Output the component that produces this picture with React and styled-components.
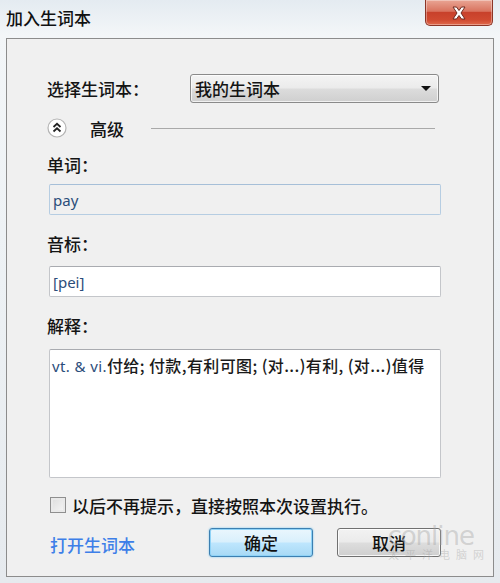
import React from 'react';
import styled, { createGlobalStyle } from 'styled-components';

const GlobalStyle = createGlobalStyle`
  html, body {
    margin: 0;
    padding: 0;
  }
  body {
    font-family: "Noto Sans CJK SC", "Liberation Sans", sans-serif;
    color: #141414;
  }
`;

const Window = styled.div`
  position: relative;
  width: 500px;
  height: 583px;
  display: flex;
  flex-direction: column;
  overflow: hidden;
  background: linear-gradient(180deg, #e4ebf1 0%, #f3f6f8 6%, #eef2f5 40%, #e6eaee 100%);
`;

const TitleBar = styled.div`
  height: 38px;
  display: flex;
  justify-content: space-between;
  align-items: flex-start;
  flex-shrink: 0;
`;

const Title = styled.div`
  margin: 7px 0 0 6px;
  font-size: 17px;
  font-weight: 500;
  line-height: 22px;
  color: #111;
`;

const CloseButton = styled.div`
  width: 68px;
  height: 26px;
  margin-right: 7px;
  box-sizing: border-box;
  border: 1px solid #8b3527;
  border-top: none;
  border-radius: 0 0 5px 5px;
  background: linear-gradient(180deg, #e9a594 0%, #d9735f 45%, #c8412b 50%, #d04a31 80%, #e06a4c 100%);
  box-shadow: inset 0 0 0 1px rgba(255, 255, 255, 0.35);
  display: flex;
  align-items: center;
  justify-content: center;
`;

const Panel = styled.div`
  flex: 1;
  margin: 0 6px 6px 6px;
  border: 1px solid #8c8c8c;
  background: #f0f0f0;
  padding: 35px 52px 0 42px;
  display: flex;
  flex-direction: column;
`;

const SelectRow = styled.div`
  display: flex;
  align-items: center;
`;

const FieldLabel = styled.div`
  font-size: 17px;
  font-weight: 500;
  line-height: 20px;
  width: ${({ $width }) => $width || 'auto'};
  margin-top: ${({ $mt }) => $mt || 0}px;
  margin-bottom: ${({ $mb }) => $mb || 0}px;
  margin-left: -2px;
  flex-shrink: 0;
`;

const Select = styled.div`
  width: 249px;
  height: 29px;
  box-sizing: border-box;
  border: 1px solid #8a8a8a;
  border-radius: 3px;
  background: linear-gradient(180deg, #f4f4f4 0%, #ebebeb 48%, #dcdcdc 52%, #cfcfcf 100%);
  box-shadow: inset 0 0 0 1px rgba(255, 255, 255, 0.7);
  display: flex;
  align-items: center;
  justify-content: space-between;
  padding: 0 7px 0 4px;
  font-size: 17px;
  font-weight: 500;
`;

const Arrow = styled.span`
  width: 0;
  height: 0;
  border-left: 5px solid transparent;
  border-right: 5px solid transparent;
  border-top: 5px solid #111;
`;

const AdvancedRow = styled.div`
  display: flex;
  align-items: center;
  height: 20px;
  margin: 15px 0 17px -2px;
`;

const ToggleCircle = styled.div`
  width: 20px;
  height: 20px;
  flex-shrink: 0;
`;

const AdvancedText = styled.span`
  font-size: 17px;
  font-weight: 500;
  margin-left: 23px;
`;

const Divider = styled.div`
  flex: 1;
  height: 1px;
  background: #a9a9a9;
  margin: 0 6px 0 27px;
`;

const TextBox = styled.div`
  height: ${({ $h }) => $h || 31}px;
  box-sizing: border-box;
  border: 1px solid ${({ $readonly }) => ($readonly ? '#b6cde2' : '#c4c6ca')};
  border-top-color: ${({ $readonly }) => ($readonly ? '#a6bfd8' : '#a9abb0')};
  border-radius: 2px;
  background: ${({ $readonly }) => ($readonly ? '#f0f0f0' : '#ffffff')};
  padding: ${({ $multi }) => ($multi ? '5px 2px' : '0 3px')};
  display: flex;
  align-items: ${({ $multi }) => ($multi ? 'flex-start' : 'center')};
  font-size: 16px;
  font-weight: 500;
  line-height: 20px;
  letter-spacing: ${({ $multi }) => ($multi ? '0.4px' : '0')};
  color: #1a1a1a;
  white-space: nowrap;
  overflow: hidden;
`;

const Latin = styled.span`
  color: #2b4d7a;
  font-family: "Noto Sans", "Liberation Sans", sans-serif;
  font-size: 15px;
  font-weight: 400;
`;

const CheckRow = styled.label`
  display: flex;
  align-items: center;
  height: 20px;
  margin: 17px 0 0 1px;
  font-size: 17px;
  font-weight: 500;
`;

const CheckBox = styled.span`
  width: 14px;
  height: 14px;
  border: 1px solid #8f8f8f;
  background: linear-gradient(135deg, #dcdcdc 0%, #f6f6f6 100%);
  box-shadow: inset 0 0 0 2px #e9e9e9;
  margin-right: 6px;
  flex-shrink: 0;
`;

const BottomRow = styled.div`
  display: flex;
  align-items: center;
  justify-content: space-between;
  margin-top: 13px;
`;

const Link = styled.a`
  color: #3e7fe8;
  font-size: 17px;
  font-weight: 500;
  text-decoration: none;
  margin-left: 1px;
  margin-top: 3px;
`;

const ButtonGroup = styled.div`
  display: flex;
  gap: 24px;
`;

const Button = styled.button`
  width: 104px;
  height: 29px;
  box-sizing: border-box;
  border-radius: 3px;
  font-family: "Noto Sans CJK SC", sans-serif;
  font-size: 17px;
  font-weight: 500;
  line-height: 20px;
  color: #111;
  padding: 0;
  border: 1px solid ${({ $primary }) => ($primary ? '#3c7fb1' : '#707070')};
  background: ${({ $primary }) =>
    $primary
      ? 'linear-gradient(180deg, #eaf6fd 0%, #d9f0fc 48%, #bee6fd 52%, #a7d9f5 100%)'
      : 'linear-gradient(180deg, #f2f2f2 0%, #ebebeb 48%, #dddddd 52%, #cfcfcf 100%)'};
  box-shadow: ${({ $primary }) =>
    $primary ? 'inset 0 0 0 1px #8fd3f7, 0 0 2px #6cc0ee' : 'inset 0 0 0 1px rgba(255,255,255,0.8)'};
`;

const Watermark = styled.div`
  position: absolute;
  right: 10px;
  bottom: 22px;
  display: flex;
  flex-direction: column;
  align-items: flex-end;
  color: rgba(160, 160, 160, 0.4);
  pointer-events: none;
`;

const WatermarkBig = styled.div`
  font-family: "DejaVu Sans", sans-serif;
  font-size: 26px;
  line-height: 22px;
  letter-spacing: -1px;
  margin-right: 16px;
`;

const WatermarkSmall = styled.div`
  font-size: 11px;
  letter-spacing: 6px;
  line-height: 14px;
`;

function CloseIcon() {
  return (
    <svg width="16" height="14" viewBox="0 0 16 14">
      <path
        d="M2 1 L5.5 1 L8 4.5 L10.5 1 L14 1 L10 7 L14 13 L10.5 13 L8 9.5 L5.5 13 L2 13 L6 7 Z"
        fill="#fff"
        stroke="#6e2a20"
        strokeWidth="1"
        strokeLinejoin="round"
      />
    </svg>
  );
}

function CollapseIcon() {
  return (
    <svg width="20" height="20" viewBox="0 0 20 20">
      <circle cx="10" cy="10" r="9" fill="#fff" stroke="#b4b4b4" strokeWidth="1.2" />
      <path d="M6.5 9 L10 5.8 L13.5 9" fill="none" stroke="#222" strokeWidth="1.8" />
      <path d="M6.5 13.5 L10 10.3 L13.5 13.5" fill="none" stroke="#222" strokeWidth="1.8" />
    </svg>
  );
}

export default function App() {
  return (
    <>
      <GlobalStyle />
      <Window>
        <TitleBar>
          <Title>加入生词本</Title>
          <CloseButton>
            <CloseIcon />
          </CloseButton>
        </TitleBar>
        <Panel>
          <SelectRow>
            <FieldLabel $width="143px">选择生词本：</FieldLabel>
            <Select>
              <span>我的生词本</span>
              <Arrow />
            </Select>
          </SelectRow>

          <AdvancedRow>
            <ToggleCircle>
              <CollapseIcon />
            </ToggleCircle>
            <AdvancedText>高级</AdvancedText>
            <Divider />
          </AdvancedRow>

          <FieldLabel $mb={9}>单词：</FieldLabel>
          <TextBox $readonly>
            <Latin>pay</Latin>
          </TextBox>

          <FieldLabel $mt={19} $mb={12}>音标：</FieldLabel>
          <TextBox>
            <Latin>[pei]</Latin>
          </TextBox>

          <FieldLabel $mt={19} $mb={13}>解释：</FieldLabel>
          <TextBox $multi $h={129}>
            <span>
              <Latin>vt. &amp; vi.</Latin>付给; 付款,有利可图; (对...)有利, (对...)值得
            </span>
          </TextBox>

          <CheckRow>
            <CheckBox />
            以后不再提示，直接按照本次设置执行。
          </CheckRow>

          <BottomRow>
            <Link href="#">打开生词本</Link>
            <ButtonGroup>
              <Button $primary>确定</Button>
              <Button>取消</Button>
            </ButtonGroup>
          </BottomRow>
        </Panel>
        <Watermark>
          <WatermarkBig>conline</WatermarkBig>
          <WatermarkSmall>太平洋电脑网</WatermarkSmall>
        </Watermark>
      </Window>
    </>
  );
}
